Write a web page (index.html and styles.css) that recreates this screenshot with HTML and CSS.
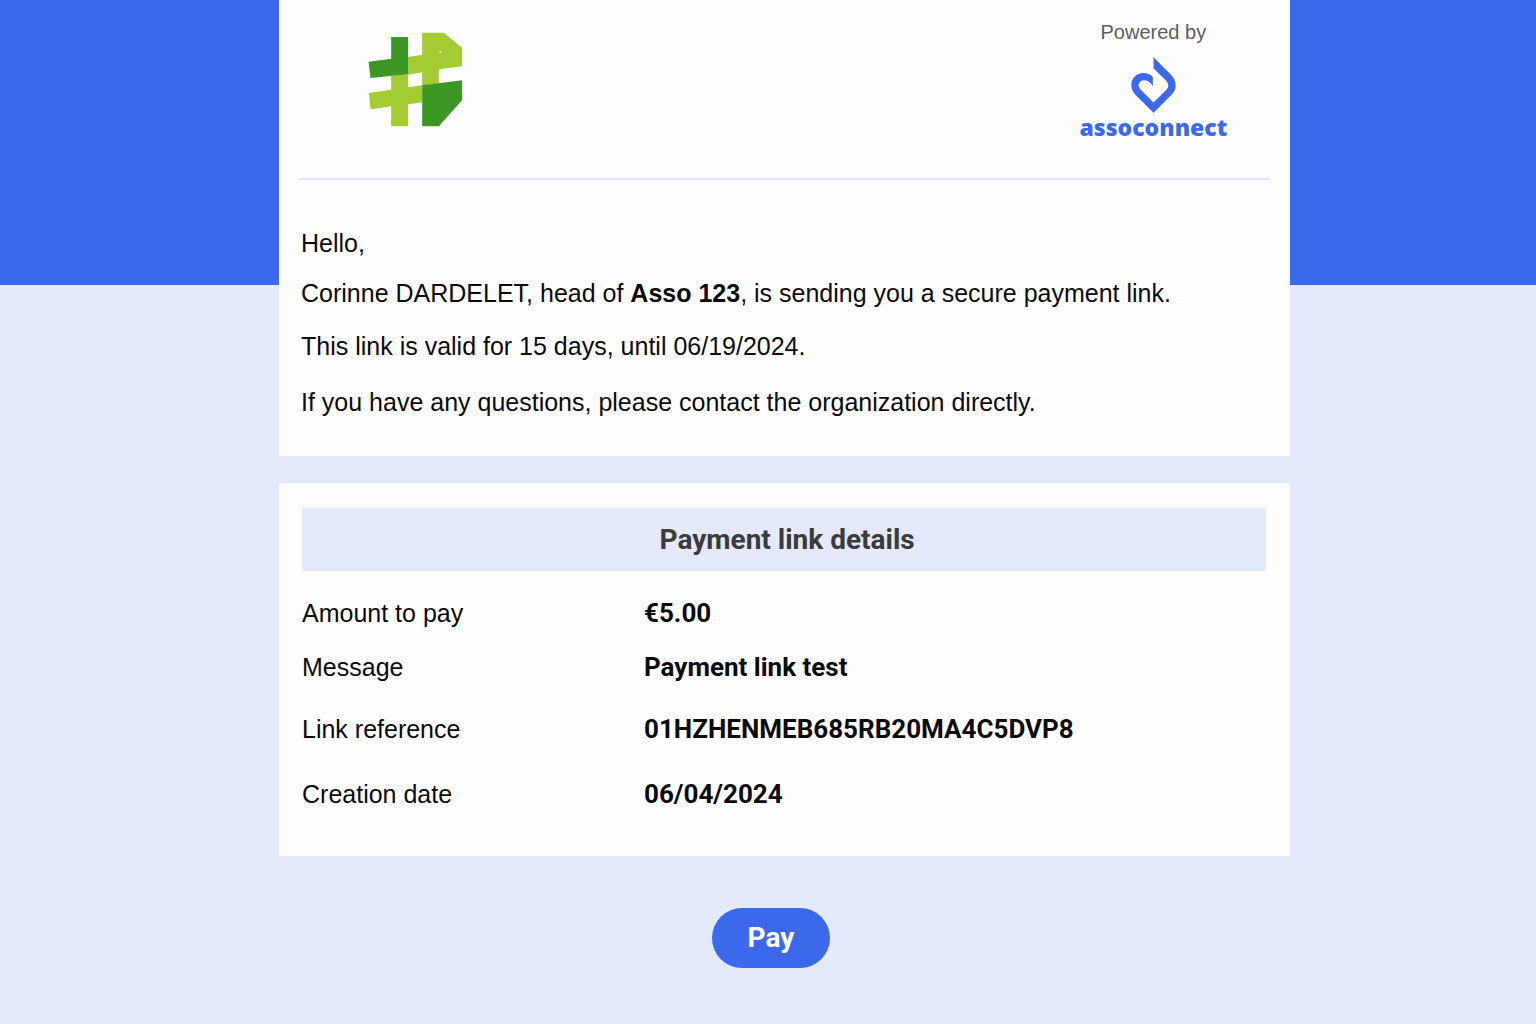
FILE: index.html
```
<!DOCTYPE html>
<html lang="en">
<head>
    <meta charset="UTF-8">
    <meta name="viewport" content="width=device-width, initial-scale=1.0">
    <title>Payment link</title>
    <link rel="stylesheet" href="styles.css">
</head>
<body>
    <main class="page">
        <section class="card intro">
            <header class="header">
                <svg class="org-logo" viewBox="55 50 284 285" role="img" aria-label="Asso 123">
                    <path fill="#a4cb32" fill-rule="evenodd" d="M217 52H282L337 97V153L267 162V204L217 211V261L175 267V333H124V273L62 282L57 233L124 223V182L175 177V125L217 118ZM217 171L175 178V216L217 210Z"/>
                    <path fill="#3d9725" d="M124 65H175V177L62 188L56 139L124 130Z"/>
                    <path fill="#3d9725" d="M217 210L337 195V254L267 333H217Z"/>
                    <circle cx="271" cy="109" r="3" fill="#fff"/>
                </svg>
                <div class="powered">
                    <span class="powered-label">Powered by</span>
                    <svg class="heart" viewBox="183 141 136 168" aria-hidden="true">
                        <path fill="#3c69eb" d="M251 141L304 194Q318 208 318 228Q318 242 307 253L251 309L197 255Q184 242 184 225C184 205 200 189 220 189Q238 189 249 201V229Q238 211 222 211C213 211 206 218 206 226Q206 233 211 238L251 278L290 239Q296 233 296 227Q296 219 290 213L251 174Z"/>
                    </svg>
                    <span class="brand">assoconnect</span>
                </div>
            </header>
            <div class="message">
                <p>Hello,</p>
                <p>Corinne DARDELET, head of <strong>Asso 123</strong>, is sending you a secure payment link.</p>
                <p>This link is valid for 15 days, until 06/19/2024.</p>
                <p>If you have any questions, please contact the organization directly.</p>
            </div>
        </section>

        <section class="card details">
            <h1>Payment link details</h1>
            <table>
                <tbody>
                    <tr><th scope="row">Amount to pay</th><td>€5.00</td></tr>
                    <tr><th scope="row">Message</th><td>Payment link test</td></tr>
                    <tr><th scope="row">Link reference</th><td>01HZHENMEB685RB20MA4C5DVP8</td></tr>
                    <tr><th scope="row">Creation date</th><td>06/04/2024</td></tr>
                </tbody>
            </table>
        </section>
    </main>
    <div class="actions">
        <button type="button" class="pay-button">Pay</button>
    </div>
</body>
</html>
```
FILE: styles.css
```
* {
    box-sizing: border-box;
}

body {
    margin: 0;
    min-height: 100vh;
    /* blue band behind the top of the first card */
    background: linear-gradient(#3c69eb 285px, #e4eafb 285px);
    font-family: "Liberation Sans", Arial, sans-serif;
    font-size: 25px;
    color: #0a0a0a;
}

.page {
    display: flex;
    flex-direction: column;
    gap: 27px;
    padding: 0 16% 0 279px;
}

.card {
    background-color: #fefefe;
}

.intro {
    padding: 0 20px 26px;
}

.header {
    display: flex;
    justify-content: space-between;
    align-items: flex-start;
    height: 180px;
    padding: 20px 43px 0 69px;
    border-bottom: 2px solid #dfe7f8;
}

.org-logo {
    width: 95px;
    height: 95px;
    margin-top: 12px;
}

.powered {
    display: flex;
    flex-direction: column;
    align-items: center;
}

.powered-label {
    font-size: 20px;
    line-height: 24px;
    color: #5c5c5c;
}

.heart {
    width: 45px;
    height: 56px;
    margin-top: 13px;
}

.brand {
    font-family: "Open Sans", sans-serif;
    font-size: 23px;
    font-weight: 800;
    line-height: 28px;
    color: #3c69eb;
}

.message {
    display: grid;
    grid-template-rows: 50px 50px 56px 56px;
    align-items: center;
    margin-top: 38px;
    padding-left: 2px;
}

.message p {
    margin: 0;
}

.details {
    padding: 25px 24px 31px 23px;
}

h1 {
    margin: 0 0 16px;
    padding-left: 6px;
    background-color: #e4eafb;
    font-family: Roboto, sans-serif;
    font-size: 28px;
    line-height: 63px;
    text-align: center;
    color: #3b3b3b;
}

table {
    width: 100%;
    border-collapse: collapse;
}

th, td {
    padding: 0;
    text-align: left;
}

th {
    width: 342px;
    font-weight: normal;
}

td {
    font-family: Roboto, sans-serif;
    font-size: 26px;
    font-weight: bold;
}

tr {
    height: 52px;
}

tr:nth-child(2) {
    height: 56px;
}

tr:nth-child(3) {
    height: 68px;
}

tr:nth-child(4) {
    height: 62px;
}

.actions {
    display: flex;
    justify-content: center;
    padding: 52px 0 56px 6px;
}

.pay-button {
    padding: 0 36px;
    border: none;
    border-radius: 30px;
    background-color: #3c69eb;
    font-family: Roboto, sans-serif;
    font-size: 28px;
    font-weight: bold;
    line-height: 60px;
    color: #fff;
    cursor: pointer;
}
```
